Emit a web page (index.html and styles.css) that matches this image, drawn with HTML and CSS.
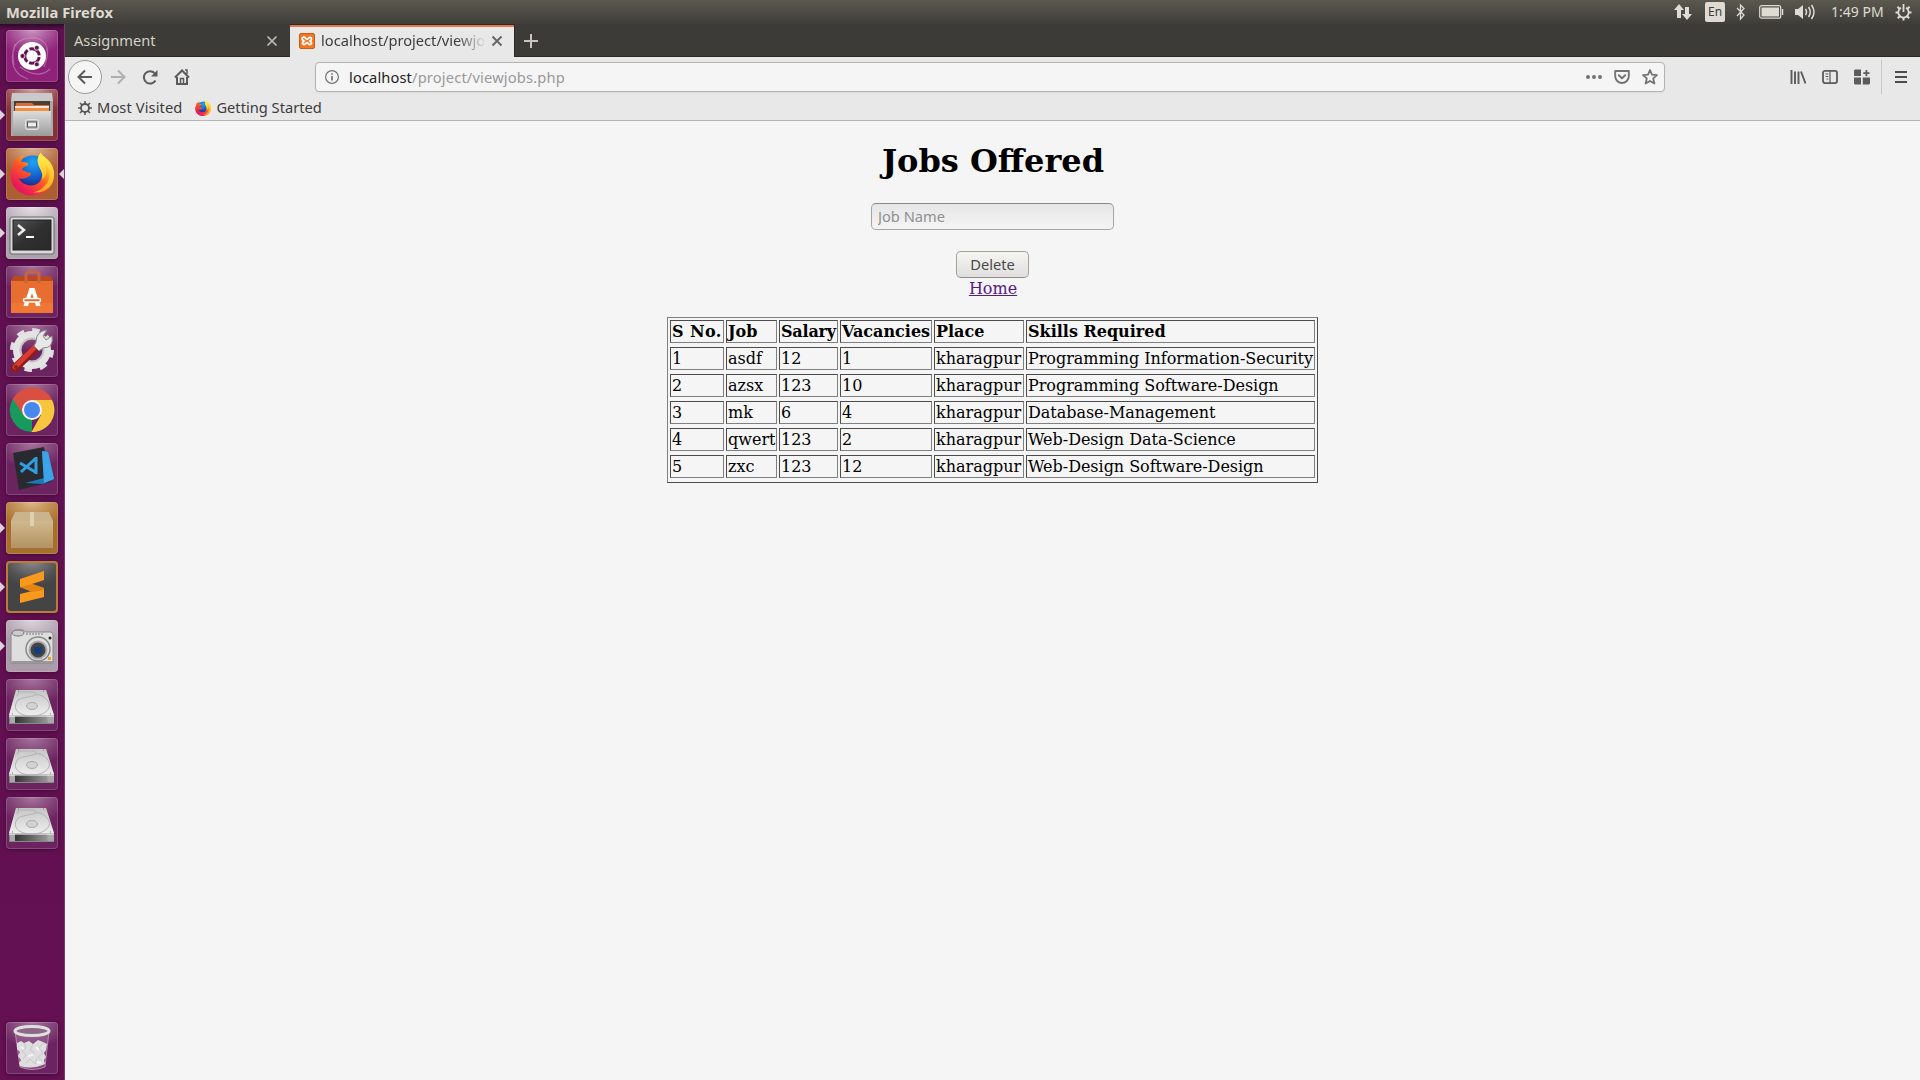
FILE: index.html
```html
<!DOCTYPE html>
<html lang="en">
<head>
<meta charset="utf-8">
<title>Mozilla Firefox</title>
<link rel="stylesheet" href="styles.css">
</head>
<body>
<svg class="defs" width="0" height="0" aria-hidden="true">
  <defs>
    <linearGradient id="steel" x1="0" y1="0" x2="0" y2="1"><stop offset="0" stop-color="#dcdcdc"/><stop offset="1" stop-color="#9c9c9c"/></linearGradient>
    <linearGradient id="disk" x1="0" y1="0" x2="0" y2="1"><stop offset="0" stop-color="#c6c6c6"/><stop offset="1" stop-color="#ededed"/></linearGradient>
    <linearGradient id="diskEdge"><stop offset="0" stop-color="#222"/><stop offset="1" stop-color="#aaa"/></linearGradient>
    <linearGradient id="foxBody" x1=".9" y1="0" x2=".1" y2="1"><stop offset="0" stop-color="#fff04a"/><stop offset=".3" stop-color="#ffb01a"/><stop offset=".5" stop-color="#ff5a22"/><stop offset=".85" stop-color="#e8175c"/></linearGradient>
    <linearGradient id="foxTail" x1="0" y1="0" x2="0" y2="1"><stop offset="0" stop-color="#fff251"/><stop offset="1" stop-color="#ffa51c"/></linearGradient>
    <radialGradient id="globe" cx=".5" cy=".2" r=".8"><stop offset="0" stop-color="#21a3f4"/><stop offset=".55" stop-color="#115fcb"/><stop offset="1" stop-color="#28166f"/></radialGradient>
    <linearGradient id="term" x1="0" y1="0" x2="1" y2="1"><stop offset="0" stop-color="#555"/><stop offset=".5" stop-color="#303030"/><stop offset="1" stop-color="#292929"/></linearGradient>
    <linearGradient id="carton" x1="0" y1="0" x2="0" y2="1"><stop offset="0" stop-color="#d0b98f"/><stop offset="1" stop-color="#b39362"/></linearGradient>
    <symbol id="firefox" viewBox="0 0 44 44">
      <circle cx="23" cy="21" r="17" fill="url(#globe)"/>
      <path d="M4 9c0 3-1 5-2 8-1 3-2 6-1 11 2 10 11 16 21 16 13 0 22-9 22-21 0-9-5-14-9-17-3-2-4-4-4-5-3 3-4 7-3 11 1 5 5 8 4 13-1 6-6 9-11 9-6 0-11-4-12-7 5 1 8-1 11-3 2-1 1-3-1-3-3 0-4-2-6-2-2-1 0-4 5-5v-2c-2-2-5-1-7-2 1-3 2-5 4-6-4 0-7 2-9 4C4 8 4 9 4 9z" fill="url(#foxBody)"/>
      <path d="M31 1c-3 3-4 7-3 11 2 6 6 10 4 16 6-4 5-11 3-16 6 7 6 16 0 22-3 4-8 6-12 7 13 1 21-7 21-18 0-9-5-14-9-17-3-2-4-4-4-5z" fill="url(#foxTail)"/>
    </symbol>
    <symbol id="drive" viewBox="0 0 52 52">
      <path d="M10 11h30l8 26v8H3v-8z" fill="#888"/>
      <path d="M10 11h30l8 25H3z" fill="url(#disk)"/>
      <path d="M3 37h45v7H4z" fill="url(#diskEdge)"/><path d="M3 37h6v7H4zM41 37h7v7h-6z" fill="#a9a9a9"/><path d="M3 37h45" stroke="#fff"/>
      <path d="M11 17l2-4h11q8 0 5 3c-3 2-12 2-17 5" fill="none" stroke="#b4b4b4"/>
      <path d="M12 21C5 30 13 37 26 37s22-9 15-16C37 16 32 15 29 16" fill="none" stroke="#b0b0b0"/>
      <ellipse cx="26" cy="27" rx="5.500" ry="3.500" fill="#d2d2d2" stroke="#aaa"/>
      <path d="M6 35h1M44 35h1M12 12h1M37 12h1" stroke="#777"/>
    </symbol>
  </defs>
</svg>

<header class="panel">
  <span class="panel-title">Mozilla Firefox</span>
  <div class="indicators">
    <svg class="i-net" width="18" height="18" viewBox="0 0 18 18" fill="#dfdbd2"><path d="M5 1L0 7h3v8h4V7h3zM13 17l-5-6h3V4h4v7h3z"/></svg>
    <span class="lang">En</span>
    <svg class="i-bt" width="10" height="18" viewBox="0 0 10 18" fill="none" stroke="#dfdbd2" stroke-width="1.300"><path d="M1 5l7 7-3.500 4V2L8 5.500 1 13"/></svg>
    <svg class="i-bat" width="25" height="14" viewBox="0 0 25 14"><rect x=".7" y=".7" width="21" height="12.500" rx="2" fill="none" stroke="#dfdbd2" stroke-width="1.200"/><rect x="2.500" y="2.500" width="17.500" height="9" fill="#dfdbd2"/><path d="M23.500 4v6" stroke="#dfdbd2" stroke-width="1.500"/></svg>
    <svg class="i-vol" width="21" height="18" viewBox="0 0 21 18" fill="none" stroke="#dfdbd2" stroke-width="1.500"><path d="M0 6h3l5-4v14l-5-4H0z" fill="#dfdbd2" stroke="none"/><path d="M10.500 6q2 3 0 6M13.500 4q3.500 5 0 10M16.500 2q5 7 0 14"/></svg>
    <span class="clock">1:49 PM</span>
    <svg class="i-gear" width="17" height="17" viewBox="0 0 17 17" fill="none" stroke="#dfdbd2"><path d="M6 3.800a5.200 5.200 0 1 0 5 0" stroke-width="1.800"/><path d="M8.500 0v8" stroke-width="1.800"/><path d="M.5 8.500H3M14 8.500h2.500M2.500 2.800l2 2M14.500 2.800l-2 2M2.800 14.200l2-2M14.200 14.200l-2-2M8.500 14v2.500" stroke-width="2"/></svg>
  </div>
</header>

<div class="desktop">
  <nav class="launcher">
    <div class="tile dash"><svg viewBox="0 0 52 52"><path d="M8 35Q2 6 30 8Q48 13 38 37M9 14Q0 42 22 49M44 39Q32 50 14 37" fill="none" stroke="#d6a0cb" stroke-opacity=".5" stroke-width="1.200"/><circle cx="26" cy="26" r="14" fill="#fff"/><circle cx="26" cy="26" r="7.300" fill="none" stroke="#65154f" stroke-width="3" stroke-dasharray="13.300 2" stroke-dashoffset="-1"/><g fill="#65154f" stroke="#fff" stroke-width=".8"><circle cx="16.500" cy="26" r="2.500"/><circle cx="30.800" cy="17.800" r="2.500"/><circle cx="30.800" cy="34.300" r="2.500"/></g></svg></div>
    <div class="tile files running"><svg viewBox="0 0 52 52"><path d="M6 4h40l1 8v35H5V12z" fill="#c9c9c9"/><path d="M5 12h42v35H5z" fill="#a9a9a9"/><path d="M8 12h36v10H8z" fill="#4b4039"/><path d="M10 14h16l2 2h15v6H9z" fill="#d5703a"/><path d="M9 17h34v2H9z" fill="#f6e5d8"/><path d="M9 19h34v4H9z" fill="#ee9044"/><path d="M7 22h38v25H7z" fill="url(#steel)"/><rect x="19.500" y="30.500" width="13" height="10" rx="2" fill="#bbb" stroke="#e5e5e5"/><rect x="21.500" y="33" width="9" height="5" fill="#eee" stroke="#555"/></svg></div>
    <div class="tile fox running focused"><svg viewBox="0 0 52 52"><use href="#firefox" x="4" y="3" width="44" height="45"/></svg></div>
    <div class="tile terminal running"><svg viewBox="0 0 52 52"><rect x="4" y="10" width="44" height="37" rx="2" fill="#d9d9d9" stroke="#666"/><rect x="7" y="13" width="38" height="30" fill="url(#term)" stroke="#222"/><path d="M12 18l6 5-6 5" fill="none" stroke="#eee" stroke-width="2.500"/><path d="M20 30h8" stroke="#fff" stroke-width="2"/></svg></div>
    <div class="tile store"><svg viewBox="0 0 52 52"><path d="M5 14h42v33H5z" fill="#e76d30"/><path d="M8 10h37l2 5H5z" fill="#b84b1d"/><path d="M5 37h42v10H5z" fill="#ef7835"/><path d="M20 17V9q0-3 3-3h7q3 0 3 3v8" fill="none" stroke="#c96340" stroke-width="3"/><path d="M17.500 40l6-18h5l6 18h-4.500l-4-13-4 13z" fill="#fff"/><rect x="17.500" y="32.500" width="17" height="3.500" rx="1.700" fill="#e8682c" stroke="#fff" stroke-width="1.500"/></svg></div>
    <div class="tile plain"><svg viewBox="0 0 52 52"><circle cx="26" cy="25" r="19.500" fill="none" stroke="#dedede" stroke-width="5" stroke-dasharray="7.300 7.950"/><circle cx="26" cy="25" r="15" fill="none" stroke="#e4e4e4" stroke-width="8"/><circle cx="26" cy="25" r="11.500" fill="none" stroke="#c3c3c3" stroke-width="2"/><path d="M9 43L32 21" stroke="#8f1a17" stroke-width="8" stroke-linecap="round"/><path d="M9 42L31 20" stroke="#d83a34" stroke-width="5" stroke-linecap="round"/><path d="M30 17q0-11 11-12l-4 6 3 4 6-4q2 12-9 12l-4 3-5-5z" fill="#e8e8e8" stroke="#888"/><circle cx="10" cy="42" r="2" fill="#8b1f1a"/></svg></div>
    <div class="tile plain"><svg viewBox="0 0 52 52"><path d="M26 26L6.900 15A22 22 0 0 1 46 16z" fill="#d95043"/><path d="M26 26v22A22 22 0 0 1 6.900 15z" fill="#169b5d"/><path d="M26 16h20A22 22 0 0 1 25.500 48L35 31z" fill="#f6c73c"/><path d="M6.900 15L18 32l8-16h20A22 22 0 0 0 6.900 15z" fill="#d95043"/><circle cx="26" cy="26" r="10" fill="#f2f2f2"/><circle cx="26" cy="26" r="8" fill="#4688ee"/></svg></div>
    <div class="tile plain"><svg viewBox="0 0 52 52"><path d="M7 10l31-6 7 35-32 8z" fill="#292a30"/><path d="M36 8l6 1 6 27-11 5-18-1 19-5z" fill="#1d78b8"/><path d="M36 8l6 1 6 27-10 4z" fill="#3ba4e9"/><path d="M30 14v17M30 15L15 29M14 20l17 10" fill="none" stroke="#309fe0" stroke-width="3"/></svg></div>
    <div class="tile package running"><svg viewBox="0 0 52 52"><path d="M9 10h34l4 10v27H5V20z" fill="#947647"/><path d="M9 10h34l4 9H5z" fill="#c9b48d"/><path d="M5 19h42v27H5z" fill="url(#carton)"/><path d="M24 10h4v14h-4z" fill="#ddcfb2"/></svg></div>
    <div class="tile sublime running"><svg viewBox="0 0 52 52"><path d="M14 18l24-8v9l-12 4 12 4v9l-24 6v-9l12-3-12-4z" fill="#f9991d"/><path d="M14 26l12-3 12 4v2l-12 2z" fill="#e58412"/></svg></div>
    <div class="tile camera running"><svg viewBox="0 0 52 52"><path d="M5 14l4-4h8l3 2h25l2 2v29H5z" fill="#dedede" stroke="#888"/><path d="M6 42h41" stroke="#999" stroke-width="2"/><ellipse cx="12" cy="13" rx="6" ry="3" fill="#ccc" stroke="#777"/><path d="M20 14h18" stroke="#777" stroke-dasharray="2 1"/><circle cx="32" cy="29" r="12" fill="#e0e0e0" stroke="#888" stroke-width="1.500"/><circle cx="32" cy="30" r="8.500" fill="#444" stroke="#aaa" stroke-width="2"/><rect x="28" y="27" width="8" height="7" rx="1" fill="#173d7a"/><circle cx="44" cy="18" r="1.500" fill="#222"/><path d="M42 37h3v3h-3z" fill="#f39a22"/></svg></div>
    <div class="tile plain"><svg viewBox="0 0 52 52"><use href="#drive" width="52" height="52"/></svg></div>
    <div class="tile plain"><svg viewBox="0 0 52 52"><use href="#drive" width="52" height="52"/></svg></div>
    <div class="tile plain"><svg viewBox="0 0 52 52"><use href="#drive" width="52" height="52"/></svg></div>
    <div class="tile plain trash"><svg viewBox="0 0 52 52"><path d="M9 9h34l-4 36q-13 5-25 0z" fill="#b58aae" fill-opacity=".35" stroke="#c9aac4" stroke-opacity=".7"/><path d="M11 21l4-2 3 2 5-2 4 3 5-4 5 2 4 2-1 6-2 3 2 4-2 3 1 4q-13 6-25 2l-1-3 2-3-3-4 2-4-3-3z" fill="#dedede"/><path d="M18 21l2 5-4 3 4 4-3 4M27 22l-3 6 5 3M37 21l-4 5 4 5-5 4 4 4M20 41l4-4 5 5 2-6" fill="none" stroke="#c8c8c8"/><path d="M15 25l3 2M30 25l3 3M22 34l5-1M31 40l4 1" stroke="#f6f6f6" stroke-width="2"/><ellipse cx="26" cy="9" rx="17" ry="4.500" fill="#8d6688" stroke="#e0e0e0" stroke-width="3"/></svg></div>
  </nav>

  <main class="browser">
    <div class="tabs">
      <div class="tab"><span class="t-assign">Assignment</span><svg class="close" width="12" height="12" viewBox="0 0 12 12"><path d="M1.500 1.500l9 9M10.500 1.500l-9 9"/></svg></div>
      <div class="tab active">
        <svg class="favicon" width="16" height="16" viewBox="0 0 16 16"><rect x=".5" y=".5" width="15" height="15" rx="1.500" fill="#f37623" stroke="#c65c18"/><path d="M5 4.200a1.600 1.600 0 0 0-1 3L5 8l-1 .8a1.600 1.600 0 1 0 2.600 1.700L8 9.700l1.400.8A1.600 1.600 0 1 0 12 8.800L11 8l1-.8a1.600 1.600 0 1 0-2.600-1.700L8 6.300l-1.400-.8A1.600 1.600 0 0 0 5 4.200z" fill="none" stroke="#fff" stroke-width="1.800"/></svg>
        <span class="t-active">localhost/project/viewjobs.php</span>
        <svg class="close" width="12" height="12" viewBox="0 0 12 12"><path d="M1.500 1.500l9 9M10.500 1.500l-9 9"/></svg>
      </div>
      <svg class="plus" width="14" height="14" viewBox="0 0 14 14"><path d="M7 0v14M0 7h14" stroke="#c8c5bf" stroke-width="2"/></svg>
    </div>

    <div class="toolbar">
      <span class="back"><svg width="16" height="16" viewBox="0 0 16 16"><path d="M15 8H1.500M8 1.500L1.500 8 8 14.500" /></svg></span>
      <svg class="forward" width="16" height="16" viewBox="0 0 16 16"><path d="M1 8h13.500M8 1.500L14.500 8 8 14.500"/></svg>
      <svg class="reload" width="16" height="16" viewBox="0 0 16 16"><path d="M13.500 11.500A6.200 6.200 0 1 1 12.500 4" fill="none"/><path d="M15.500 1v6.500H9z" fill="#5b5b5b" stroke="none"/></svg>
      <svg class="home" width="16" height="16" viewBox="0 0 16 16"><path d="M1 8.500l7-7 7 7M3 8v7h10V8" fill="none"/><path d="M6.500 15V9.500h3V15" fill="none" stroke-width="1.500"/><path d="M11 1h2v4" fill="none" stroke-width="1.500"/></svg>
      <div class="urlbar">
        <svg width="14" height="14" viewBox="0 0 14 14"><circle cx="7" cy="7" r="6.400" fill="none" stroke="#737373" stroke-width="1.200"/><path d="M7 6v4.500M7 3.200v1.600" stroke="#737373" stroke-width="1.700"/></svg>
        <span class="url"><span class="host">localhost</span><span class="path">/project/viewjobs.php</span></span>
        <div class="page-actions">
          <svg width="16" height="16" viewBox="0 0 16 16" fill="#737373" stroke="none"><circle cx="2" cy="8" r="2"/><circle cx="8" cy="8" r="2"/><circle cx="14" cy="8" r="2"/></svg>
          <svg width="16" height="16" viewBox="0 0 16 16" fill="none" stroke="#737373" stroke-width="1.900" stroke-linejoin="round" stroke-linecap="round"><path d="M1.200 2h13.600v5.200a6.800 6.800 0 0 1-13.600 0zM4.800 6.200L8 9.300l3.200-3.100"/></svg>
          <svg width="16" height="16" viewBox="0 0 16 16" fill="none" stroke="#737373" stroke-width="1.800" stroke-linejoin="round"><path d="M8 1l2 4.600 5 .5-3.800 3.300 1.200 5.100L8 11.900l-4.400 2.600 1.200-5.100L1 6.100l5-.5z"/></svg>
        </div>
      </div>
      <div class="tools">
        <svg width="16" height="16" viewBox="0 0 16 16" stroke="#5b5b5b" stroke-width="1.900" fill="none"><path d="M1.500 1v14M5 2.500V15M8.500 2.500V15M11 2.500L15.500 14.500"/></svg>
        <svg width="16" height="16" viewBox="0 0 16 16" stroke="#5b5b5b" stroke-width="1.800" fill="none"><rect x="1" y="1.900" width="14" height="12.200" rx="2"/><path d="M8 2v12M3.500 5h2.800M3.500 7.500h2.800M4.500 10h1.800" stroke-width="1.200"/></svg>
        <svg width="16" height="16" viewBox="0 0 16 16" fill="#5b5b5b" stroke="none"><path d="M1 .5h6v6.500H0v-5.500zM0 8.500h7V15.500H1l-1-1zM8.800 8.500H16v6l-1 1H8.800zM11.500 1h1.800v2.300h2.200V5h-2.200v2.300h-1.800V5H9.300V3.300h2.200z"/></svg>
        <i class="divider"></i>
        <svg width="12" height="12" viewBox="0 0 12 12" stroke="#4c4c4c" stroke-width="2"><path d="M0 1h12M0 6h12M0 11h12"/></svg>
      </div>
    </div>

    <div class="bookmarks">
      <svg width="14" height="14" viewBox="0 0 14 14" fill="none" stroke="#555" stroke-width="1.800"><circle cx="7" cy="7" r="4"/><path d="M7 0v3M7 11v3M0 7h3M11 7h3M2 2l2 2M10 10l2 2M12 2l-2 2M4 10l-2 2" stroke-width="1.600"/></svg>
      <span class="t-most">Most Visited</span>
      <svg class="mini-fox" width="16" height="16"><use href="#firefox" width="16" height="16"/></svg>
      <span class="t-start">Getting Started</span>
    </div>

    <section class="page">
      <h1>Jobs Offered</h1>
      <form>
        <input type="text" placeholder="Job Name">
        <button type="button">Delete</button>
      </form>
      <a href="#">Home</a>
      <table>
        <colgroup><col class="c-no"><col class="c-job"><col class="c-salary"><col class="c-vacancies"><col class="c-place"><col class="c-skills"></colgroup>
        <tr><th class="loose">S No.</th><th>Job</th><th class="tight">Salary</th><th>Vacancies</th><th>Place</th><th>Skills Required</th></tr>
        <tr></tr>
        <tr><td>1</td><td>asdf</td><td>12</td><td>1</td><td>kharagpur</td><td>Programming Information-Security</td></tr>
        <tr></tr>
        <tr><td>2</td><td>azsx</td><td>123</td><td>10</td><td>kharagpur</td><td>Programming Software-Design</td></tr>
        <tr></tr>
        <tr><td>3</td><td>mk</td><td>6</td><td>4</td><td>kharagpur</td><td>Database-Management</td></tr>
        <tr></tr>
        <tr><td>4</td><td>qwert</td><td>123</td><td>2</td><td>kharagpur</td><td>Web-Design Data-Science</td></tr>
        <tr></tr>
        <tr><td>5</td><td>zxc</td><td>123</td><td>12</td><td>kharagpur</td><td>Web-Design Software-Design</td></tr>
        <tr></tr>
      </table>
    </section>
  </main>
</div>
</body>
</html>
```
FILE: styles.css
```css
* { box-sizing: border-box; }
body {
  margin: 0;
  width: 1920px;
  height: 1080px;
  overflow: hidden;
  display: flex;
  flex-direction: column;
  background: #f5f5f5;
  font: 14.667px "Noto Sans", sans-serif;
}
svg { display: block; flex: none; }
.defs { position: absolute; }

.panel {
  flex: none;
  height: 24px;
  padding: 0 8px 0 6px;
  display: flex;
  align-items: center;
  justify-content: space-between;
  background: linear-gradient(#5b584e, #3e3d39);
  color: #dfdbd2;
  line-height: 24px;
}
.panel-title { font-weight: 700; letter-spacing: .05px; }
.indicators { display: flex; align-items: center; height: 24px; }
.lang {
  width: 20px;
  height: 20px;
  margin: 0 11px 0 13px;
  border-radius: 2px;
  background: #dfdbd2;
  color: #3c3b37;
  font-size: 12px;
  line-height: 20px;
  text-align: center;
}
.i-bat { margin-left: 13px; }
.i-vol { margin-left: 11px; }
.clock { width: 53px; margin: 0 11px 0 15px; font-size: 14px; white-space: nowrap; }

.desktop { flex: 1; display: flex; min-height: 0; }

.launcher {
  flex: none;
  width: 65px;
  padding: 6px 0 6px 6px;
  display: flex;
  flex-direction: column;
  gap: 7px;
  background: linear-gradient(#2e0a29, #5f1050 6px, #641053);
  border-right: 1px solid #7a3a6e;
}
.tile {
  position: relative;
  flex: none;
  width: 52px;
  height: 52px;
  border-radius: 4px;
  box-shadow: inset 0 0 0 1px rgba(255,255,255,.16), 0 1px 4px rgba(0,0,0,.35);
}
.tile svg { width: 52px; height: 52px; }
.tile.plain { background: radial-gradient(ellipse 38px 26px at 50% 0, #a5749d, #7c3a70 70%, #6c2460); }
.tile.dash { background: radial-gradient(ellipse 36px 26px at 50% 0, #c995be, #9d3c8b 70%, #8f2379); }
.tile.files { background: radial-gradient(ellipse 38px 26px at 50% 0, #cfa1a0, #994b50 70%, #863139); }
.tile.fox { background: radial-gradient(ellipse 38px 26px at 50% 0, #dab294, #b9744b 70%, #ad5f33); }
.tile.terminal { background: radial-gradient(ellipse 38px 26px at 50% 0, #e6e1e6, #bdb2bd 70%, #aea0ae); }
.tile.store { background: radial-gradient(ellipse 38px 26px at 50% 0, #a5749d, #7c3a70 70%, #6c2460); }
.tile.package { background: radial-gradient(ellipse 38px 26px at 50% 0, #dbb78c, #b77f3e 70%, #a86e2e); }
.tile.sublime { background: radial-gradient(ellipse 38px 26px at 50% 0, #8d8b8c, #505051 70%, #444445); box-shadow: inset 0 0 0 2px #bd7c3b, 0 1px 4px rgba(0,0,0,.35); }
.tile.camera { background: radial-gradient(ellipse 38px 26px at 50% 0, #ddd5dc, #b6a8b3 70%, #ab9ba9); }
.tile.running::before {
  content: "";
  position: absolute;
  left: -6px;
  top: 21px;
  border: solid transparent;
  border-width: 5px 0 5px 5px;
  border-left-color: #ddd3da;
}
.tile.focused::after {
  content: "";
  position: absolute;
  right: -6px;
  top: 21px;
  border: solid transparent;
  border-width: 5px 5px 5px 0;
  border-right-color: #ddd3da;
}
.tile.trash { margin-top: auto; }

.browser { flex: 1; display: flex; flex-direction: column; min-width: 0; }

.tabs {
  flex: none;
  height: 33px;
  display: flex;
  align-items: center;
  background: linear-gradient(#2b2a27, #2b2a27) bottom / 100% 1px no-repeat, #3c3b37;
  color: #d4d0c8;
}
.tab { width: 225px; height: 33px; padding: 0 12px 0 9px; display: flex; align-items: center; justify-content: space-between; line-height: 33px; }
.tab.active { width: 224px; padding: 0 11px 0 9px; justify-content: flex-start; background: #e8e8e8; color: #3c3c3c; box-shadow: inset 0 1px #2b2a27, inset 0 3px #e9764b, 1px 0 #2b2a27; line-height: 31px; }
.t-active {
  width: 165px;
  margin: 0 5px 0 6px;
  overflow: hidden;
  white-space: nowrap;
  -webkit-mask-image: linear-gradient(90deg, #000 135px, transparent 165px);
  mask-image: linear-gradient(90deg, #000 135px, transparent 165px);
}
.close { fill: none; stroke: #c0bdb6; stroke-width: 1.700; }
.active .close { stroke: #666; stroke-width: 1.900; }
.plus { margin-left: 10px; }

.toolbar {
  flex: none;
  height: 40px;
  padding-left: 3px;
  display: flex;
  align-items: center;
  background: #e8e8e8;
  stroke: #5b5b5b;
  stroke-width: 2;
}
.back { width: 34px; height: 34px; display: flex; align-items: center; justify-content: center; border: 1px solid #999; border-radius: 50%; background: #f5f5f5; }
.back svg, .forward { fill: none; }
.forward { margin-left: 8px; stroke: #b0b0b0; }
.reload { margin-left: 16px; }
.home { margin-left: 16px; }
.urlbar {
  width: 1350px;
  height: 30px;
  margin-left: 125px;
  padding: 0 6px 0 9px;
  display: flex;
  align-items: center;
  border: 1px solid #b6b2ae;
  border-radius: 4px;
  background: #f5f5f5;
  box-shadow: 0 1px 2px rgba(0,0,0,.06);
}
.url { margin-left: 10px; }
.host { color: #222; letter-spacing: .12px; }
.path { color: #999; letter-spacing: .17px; }
.page-actions { display: flex; gap: 12px; margin-left: auto; }
.tools { display: flex; align-items: center; gap: 16px; margin-left: 125px; }
.divider { width: 1px; height: 34px; margin-left: -5px; margin-right: -3px; background: #c9c9c9; }

.bookmarks {
  flex: none;
  height: 24px;
  padding: 0 0 2px 13px;
  display: flex;
  align-items: center;
  background: #e8e8e8;
  border-bottom: 1px solid #b9b6b3;
  color: #3c3c3c;
}
.bookmarks span { height: 22px; margin-left: 5px; line-height: 20px; white-space: nowrap; }
.t-most { letter-spacing: .1px; }
.mini-fox { margin-left: 13px; }

.page {
  flex: 1;
  display: flex;
  flex-direction: column;
  align-items: center;
  color: #000;
  font: 16px "DejaVu Serif", serif;
}
h1 { margin: 22px 0 0; padding-left: 1px; font-size: 32px; line-height: 37px; height: 60px; }
form { display: flex; flex-direction: column; align-items: center; gap: 21px; }
input {
  width: 243px;
  height: 27px;
  padding: 0 6px 2px;
  border: 1px solid #a5a5a5;
  border-top-color: #8a8a8a;
  border-radius: 5px;
  background: linear-gradient(#e6e6e6, #f4f4f4);
  font: 14.667px "Noto Sans", sans-serif;
}
input::placeholder { color: #909090; }
button {
  width: 73px;
  height: 27px;
  padding: 0 0 2px;
  border: 1px solid #a3a09d;
  border-bottom-color: #8f8c89;
  border-radius: 5px;
  background: linear-gradient(#f5f5f4, #e1dfdd);
  color: #4a4a4a;
  font: 14.667px "Noto Sans", sans-serif;
}
a { color: #551a8b; line-height: 19px; margin-top: 1px; padding-left: 1px; }
table {
  width: 651px;
  margin-top: 19px;
  table-layout: fixed;
  border: 1px solid;
  border-color: #808080 #4c4c4c #4c4c4c #808080;
  border-spacing: 2px;
}
.c-no { width: 54px; }
.c-job { width: 51px; }
.c-salary { width: 59px; }
.c-vacancies { width: 92px; }
.c-place { width: 90px; }
.c-skills { width: 289px; }
th, td {
  padding: 1px;
  border: 1px solid;
  border-color: #4c4c4c #808080 #808080 #4c4c4c;
  text-align: left;
  line-height: 19px;
  white-space: nowrap;
}
td:last-child { letter-spacing: -.03px; }
.loose { letter-spacing: .4px; }
.tight { letter-spacing: -.2px; }
```
